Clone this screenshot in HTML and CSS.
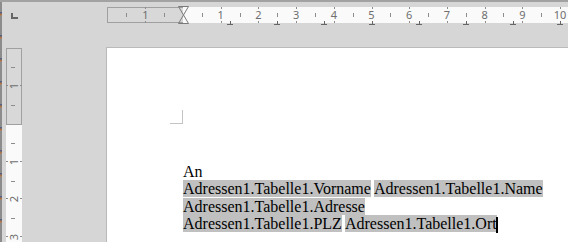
FILE: index.html
```html
<!DOCTYPE html>
<html lang="de">
<head>
  <meta charset="UTF-8" />
  <title>Serienbrief</title>
  <link rel="stylesheet" href="styles.css">
</head>
<body>
  <div class="topline"></div>
  <div class="workspace">
    <div class="edge"></div>

    <div class="corner">
      <div class="tab-type"></div>
    </div>

    <div class="hruler-cell">
      <div class="hruler" id="hruler">
        <div class="hmargin"></div>
        <svg class="indent" width="11" height="18" viewBox="0 0 11 18">
          <polygon points="0.5,0.5 10.5,0.5 5.5,9 10.5,17.5 0.5,17.5 5.5,9" fill="none" stroke="#7a7a7a" stroke-width="1" />
        </svg>
      </div>
    </div>

    <div class="vruler-cell">
      <div class="vruler" id="vruler">
        <div class="vmargin"></div>
      </div>
    </div>

    <div class="page">
      <div class="margin-corner"></div>
      <div class="letter">
        <p>An</p>
        <p><span class="field">Adressen1.Tabelle1.Vorname</span> <span class="field">Adressen1.Tabelle1.Name</span></p>
        <p><span class="field">Adressen1.Tabelle1.Adresse</span></p>
        <p><span class="field">Adressen1.Tabelle1.PLZ</span> <span class="field">Adressen1.Tabelle1.Ort</span><span class="caret"></span></p>
      </div>
    </div>
  </div>

  <script>
    const CM = 37.7;
    const ORIGIN = 76;

    function addMark(parent, cls, side, pos, text) {
      const el = document.createElement('div');
      el.className = cls;
      el.style[side] = `${pos}px`;
      if (text) el.textContent = text;
      parent.appendChild(el);
    }

    const hr = document.getElementById('hruler');
    for (let k = -2; k <= 10; k++) {
      const half = ORIGIN + (k + 0.5) * CM;
      if (half > 0 && half < 461) addMark(hr, 'half', 'left', half, '');
      if (k >= -1 && k !== 0) addMark(hr, 'num', 'left', ORIGIN + k * CM, String(Math.abs(k)));
    }
    for (let j = 1; j <= 8; j++) {
      addMark(hr, 'tab', 'left', ORIGIN + j * CM * 1.25, '');
    }

    const vr = document.getElementById('vruler');
    for (let k = -2; k <= 3; k++) {
      const half = ORIGIN + (k + 0.5) * CM;
      if (half > 0 && half < 194) addMark(vr, 'vhalf', 'top', half, '');
      if (k >= -1 && k !== 0) addMark(vr, 'num vnum', 'top', ORIGIN + k * CM, String(Math.abs(k)));
    }
  </script>
</body>
</html>
```

FILE: styles.css
```css
* {
  margin: 0;
  padding: 0;
  box-sizing: border-box;
}

html, body {
  width: 568px;
  height: 242px;
  overflow: hidden;
  background-color: #d6d6d6;
}

.topline {
  height: 2px;
  background: #a2a2a2;
}

.workspace {
  display: grid;
  grid-template-columns: 2px 104px 462px;
  grid-template-rows: 45px 195px;
}

.edge {
  grid-row: 1 / 3;
  grid-column: 1;
  background: repeating-linear-gradient(to bottom, #8c8c8c 0, #8c8c8c 10px, #3c5b93 10px, #c27a3a 13px, #8c8c8c 14px, #8c8c8c 23px);
}

.corner {
  grid-row: 1;
  grid-column: 2;
  padding: 11px 0 0 9px;
}

.tab-type {
  width: 7px;
  height: 6px;
  border-left: 2px solid #666;
  border-bottom: 2px solid #666;
}

/* rulers */

.hruler-cell {
  grid-row: 1;
  grid-column: 3;
  padding: 5px 0 0 1px;
}

.hruler {
  position: relative;
  height: 16px;
  background: #fafafa;
}

.hmargin {
  width: 76px;
  height: 16px;
  background: #d8d8d8;
  border: 1px solid #a0a0a0;
  border-right: none;
}

.indent {
  position: absolute;
  left: 71px;
  top: -1px;
}

.vruler-cell {
  grid-row: 2;
  grid-column: 2;
  padding: 1px 0 0 4px;
}

.vruler {
  position: relative;
  width: 16px;
  height: 194px;
  background: #fafafa;
}

.vmargin {
  width: 16px;
  height: 77px;
  background: #d8d8d8;
  border: 1px solid #a0a0a0;
}

.num {
  position: absolute;
  top: 0;
  width: 16px;
  height: 16px;
  margin-left: -8px;
  font-family: "Noto Sans", "DejaVu Sans", sans-serif;
  font-size: 11px;
  line-height: 16px;
  text-align: center;
  color: #6e6e6e;
}

.num::before,
.num::after {
  content: '';
  position: absolute;
  left: 8px;
  width: 1px;
  height: 2px;
  background: #8c8c8c;
}

.num::before { top: 0; }
.num::after { bottom: 0; }

.vnum {
  left: 0;
  margin-left: 0;
  margin-top: -8px;
  transform: rotate(-90deg);
}

.half {
  position: absolute;
  top: 6px;
  width: 1px;
  height: 4px;
  background: #8c8c8c;
}

.vhalf {
  position: absolute;
  left: 5px;
  width: 4px;
  height: 1px;
  background: #8c8c8c;
}

.tab {
  position: absolute;
  top: 14px;
  width: 6px;
  height: 4px;
  margin-left: -3px;
  border-bottom: 1px solid #666;
}

.tab::before {
  content: '';
  position: absolute;
  left: 3px;
  top: 0;
  width: 1px;
  height: 3px;
  background: #666;
}

/* page */

.page {
  grid-row: 2;
  grid-column: 3;
  background: #fff;
  border-left: 1px solid #bababa;
  border-top: 1px solid #bababa;
}

.margin-corner {
  width: 13px;
  height: 14px;
  margin: 62px 0 0 63px;
  border-right: 1px solid #c4c4c4;
  border-bottom: 1px solid #c4c4c4;
}

.letter {
  margin: 39px 0 0 76px;
  font-family: "Liberation Serif", serif;
  font-size: 16px;
  line-height: 17.3px;
  color: #000;
  white-space: nowrap;
}

.field {
  background: #c0c0c0;
}

.caret {
  display: inline-block;
  width: 2px;
  height: 16px;
  margin-left: -1px;
  vertical-align: -4px;
  background: #000;
}
```
